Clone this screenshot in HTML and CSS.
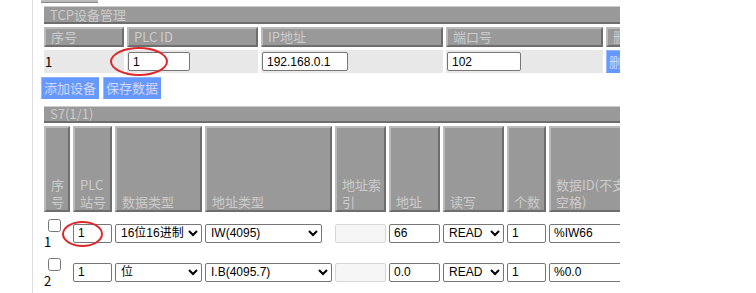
FILE: index.html
```html
<!DOCTYPE html>
<html>
<head>
	<meta charset="utf-8">
	<link rel="stylesheet" href="styles.css">
</head>
<body>
	<div class="page">
		<div class="side"></div>
		<div class="main">
			<div class="topbar"></div>
			<table class="grid tcp">
				<colgroup>
					<col class="c-no"><col class="c-id"><col class="c-ip"><col class="c-port"><col class="c-del">
				</colgroup>
				<tr>
					<th colspan="5" class="title">TCP设备管理</th>
				</tr>
				<tr class="head">
					<th>序号</th>
					<th>PLC ID</th>
					<th>IP地址</th>
					<th>端口号</th>
					<th>删除</th>
				</tr>
				<tr class="data">
					<td>1</td>
					<td><input class="txt w-id" type="text" value="1"></td>
					<td><input class="txt w-ip" type="text" value="192.168.0.1"></td>
					<td><input class="txt w-port" type="text" value="102"></td>
					<td class="del"><button class="blue">删除</button></td>
				</tr>
			</table>
			<div class="actions">
				<button class="blue">添加设备</button>
				<button class="blue">保存数据</button>
			</div>
			<table class="grid s7">
				<colgroup>
					<col class="s-no"><col class="s-plc"><col class="s-type"><col class="s-area"><col class="s-idx"><col class="s-addr"><col class="s-rw"><col class="s-cnt"><col class="s-data">
				</colgroup>
				<tr>
					<th colspan="9" class="title">S7(1/1)</th>
				</tr>
				<tr class="head tall">
					<th>序号</th>
					<th>PLC 站号</th>
					<th>数据类型</th>
					<th>地址类型</th>
					<th>地址索引</th>
					<th>地址</th>
					<th>读写</th>
					<th>个数</th>
					<th>数据ID(不支持空格)</th>
				</tr>
				<tr class="row">
					<td class="num"><input type="checkbox"><br>1</td>
					<td><input class="txt full" type="text" value="1"></td>
					<td><select class="sel full"><option>16位16进制</option></select></td>
					<td><select class="sel w-area"><option>IW(4095)</option></select></td>
					<td><input class="txt full" type="text" disabled></td>
					<td><input class="txt full" type="text" value="66"></td>
					<td><select class="sel full"><option>READ</option></select></td>
					<td><input class="txt full" type="text" value="1"></td>
					<td><input class="txt full" type="text" value="%IW66"></td>
				</tr>
				<tr class="row">
					<td class="num"><input type="checkbox"><br>2</td>
					<td><input class="txt full" type="text" value="1"></td>
					<td><select class="sel full"><option>位</option></select></td>
					<td><select class="sel full"><option>I.B(4095.7)</option></select></td>
					<td><input class="txt full" type="text" disabled></td>
					<td><input class="txt full" type="text" value="0.0"></td>
					<td><select class="sel full"><option>READ</option></select></td>
					<td><input class="txt full" type="text" value="1"></td>
					<td><input class="txt full" type="text" value="%0.0"></td>
				</tr>
				<tr class="row">
					<td class="num"><input type="checkbox"><br>3</td>
					<td colspan="8"></td>
				</tr>
			</table>
		</div>
	</div>
	<div class="mark mark-tcp"></div>
	<div class="mark mark-s7"></div>
</body>
</html>
```
FILE: styles.css
```css
body {
	margin: 0;
	position: relative;
	background: #ffffff;
	font-family: "Noto Sans CJK SC", sans-serif;
	font-size: 13px;
	color: #000000;
}
.page {
	display: flex;
	height: 293px;
	overflow: hidden;
}
.side {
	width: 32px;
	border-right: 1px solid #dddddd;
	flex-shrink: 0;
}
.main {
	width: 579px;
	padding-left: 8px;
	overflow: hidden;
	flex-shrink: 0;
}
.topbar {
	width: 57px;
	height: 2px;
	background: #bbbbbb;
	border-bottom: 1px solid #888888;
}

/* tables */
.grid {
	border-collapse: separate;
	border-spacing: 3px;
	table-layout: fixed;
}
.tcp {
	width: 614px;
}
.s7 {
	width: 611px;
	margin-top: 4px;
}
.c-no { width: 80px; }
.c-id { width: 131px; }
.c-ip { width: 182px; }
.c-port { width: 157px; }
.c-del { width: 46px; }
.s-no { width: 26px; }
.s-plc { width: 39px; }
.s-type { width: 87px; }
.s-area { width: 127px; }
.s-idx { width: 51px; }
.s-addr { width: 51px; }
.s-rw { width: 61px; }
.s-cnt { width: 39px; }
.s-data { width: 100px; }

th {
	background: #999999;
	color: #cccccc;
	font-weight: normal;
	text-align: left;
	border: 2px solid;
	border-color: #bbbbbb #6e6e6e #6e6e6e #bbbbbb;
	padding: 0 2px 0 5px;
	line-height: 16px;
	overflow: hidden;
}
th.title {
	border-width: 1px 0 2px 0;
	border-color: #cccccc #6e6e6e #6e6e6e #6e6e6e;
	height: 18px;
	line-height: 15px;
	padding-left: 6px;
	box-sizing: border-box;
}
.s7 th.title {
	height: 17px;
	line-height: 14px;
}
.head th {
	height: 20px;
	box-sizing: border-box;
	vertical-align: middle;
}
.head.tall th {
	height: 86px;
	vertical-align: bottom;
	line-height: 17px;
}
td {
	padding: 2px 0 2px 1px;
	vertical-align: middle;
	overflow: hidden;
	line-height: 19px;
}
.data td {
	background: #e8e8e8;
	height: 19px;
}
.data td.del {
	padding: 0;
}
.row td {
	padding: 0;
}
.row td.num {
	line-height: 14px;
	padding-bottom: 2px;
}
.row input[type="checkbox"] {
	margin: 4px 3px 3px 4px;
}

/* form controls */
.txt,
.sel {
	display: block;
	box-sizing: border-box;
	height: 19px;
	border: 1px solid #767676;
	border-radius: 2px;
	font-family: "Liberation Sans", "Noto Sans CJK SC", sans-serif;
	font-size: 12px;
	color: #000000;
	background: #ffffff;
}
.txt {
	padding: 0 4px;
}
.sel {
	padding: 0 0 0 1px;
}
.txt:disabled {
	background: #f6f6f6;
	border-color: #d6d6d6;
}
.full { width: 100%; }
.w-id { width: 62px; }
.w-ip { width: 86px; }
.w-port { width: 74px; }
.w-area { width: 117px; }

.blue {
	background: #6699ff;
	color: #d4d8f4;
	border: 1px solid #6699ff;
	border-left-color: #9ab8ff;
	border-top-color: #8fb0ff;
	font-family: "Noto Sans CJK SC", sans-serif;
	font-size: 13px;
	line-height: 18px;
	height: 22px;
	padding: 0 2px;
	cursor: pointer;
}
.del .blue {
	display: block;
	height: 23px;
	width: 46px;
	text-align: left;
}
.actions {
	display: flex;
	gap: 4px;
	height: 22px;
	margin-top: 1px;
}

/* red annotation rings */
.mark {
	position: absolute;
	border: 2px solid #e0282c;
	border-radius: 50%;
	box-sizing: border-box;
}
.mark-tcp {
	left: 110px;
	top: 47px;
	width: 58px;
	height: 29px;
}
.mark-s7 {
	left: 62px;
	top: 221px;
	width: 41px;
	height: 26px;
}
```
